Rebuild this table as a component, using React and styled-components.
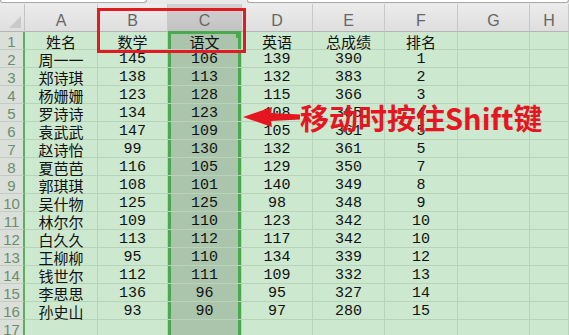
import React from "react";
import styled, { createGlobalStyle } from "styled-components";

const GlobalStyle = createGlobalStyle`
  html, body {
    margin: 0;
    padding: 0;
    background: #cce8cf;
    overflow: hidden;
  }
  * { box-sizing: border-box; }
`;

const COLS = ["A", "B", "C", "D", "E", "F", "G", "H"];
const WIDTHS = "25px 73px 70px 74px 71px 72px 73px 72px 1fr";
const SELECTED = 2; // column C

const rows = [
  ["姓名", "数学", "语文", "英语", "总成绩", "排名"],
  ["周一一", "145", "106", "139", "390", "1"],
  ["郑诗琪", "138", "113", "132", "383", "2"],
  ["杨姗姗", "123", "128", "115", "366", "3"],
  ["罗诗诗", "134", "123", "108", "365", "4"],
  ["袁武武", "147", "109", "105", "361", "5"],
  ["赵诗怡", "99", "130", "132", "361", "5"],
  ["夏芭芭", "116", "105", "129", "350", "7"],
  ["郭琪琪", "108", "101", "140", "349", "8"],
  ["吴什物", "125", "125", "98", "348", "9"],
  ["林尔尔", "109", "110", "123", "342", "10"],
  ["白久久", "113", "112", "117", "342", "10"],
  ["王柳柳", "95", "110", "134", "339", "12"],
  ["钱世尔", "112", "111", "109", "332", "13"],
  ["李思思", "136", "96", "95", "327", "14"],
  ["孙史山", "93", "90", "97", "280", "15"],
  ["", "", "", "", "", ""],
];

const Page = styled.div`
  position: relative;
  width: 569px;
  height: 335px;
  overflow: hidden;
`;

const TopStrip = styled.div`
  height: 4px;
  background: #e9e9e9;
  display: flex;
  gap: 100px;
`;

const FormulaBox = styled.div`
  height: 3px;
  width: ${(p) => p.$w};
  flex: ${(p) => (p.$grow ? 1 : "none")};
  background: #fff;
  border: 1px solid #a9a9a9;
  border-top: none;
  border-radius: 0 0 4px 4px;
`;

const Sheet = styled.div`
  display: grid;
  grid-template-columns: ${WIDTHS};
  grid-template-rows: 28px;
  grid-auto-rows: 18px;
`;

const Corner = styled.div`
  position: relative;
  background: linear-gradient(#ececec, #dedede);
  border-right: 1px solid #c4c4c4;
  border-bottom: 1px solid #b4b4b4;

  &::after {
    content: "";
    position: absolute;
    right: 3px;
    bottom: 3px;
    border-left: 12px solid transparent;
    border-bottom: 12px solid #c9c9c9;
  }
`;

const ColHead = styled.div`
  display: flex;
  align-items: center;
  justify-content: center;
  padding-top: 7px;
  background: ${(p) =>
    p.$sel ? "linear-gradient(#d2d2d2, #c2c2c2)" : "linear-gradient(#ececec, #dedede)"};
  border-right: 1px solid #c8c8c8;
  border-bottom: 1px solid ${(p) => (p.$sel ? "#4aa94e" : "#b4b4b4")};
  color: #666;
  font-family: "Liberation Sans", Arial, sans-serif;
  font-size: 16px;
`;

const RowHead = styled.div`
  display: flex;
  align-items: center;
  justify-content: center;
  background: #dadfda;
  border-bottom: 1px solid #c4cbc4;
  border-right: 2px solid #58b05a;
  color: #6a8d6a;
  font-family: "Liberation Sans", Arial, sans-serif;
  font-size: 15px;
  padding-top: 2px;
`;

const Cell = styled.div`
  position: relative;
  display: flex;
  align-items: center;
  justify-content: center;
  padding-top: 2px;
  background: ${(p) => (p.$sel ? "#aac5ab" : "#cce8cf")};
  border-right: 1px solid #b7d3b9;
  border-bottom: 1px solid #b7d3b9;
  box-shadow: ${(p) =>
    p.$sel
      ? `inset 3px 0 #4aa94e, inset -3px 0 #4aa94e${p.$top ? ", inset 0 2px #4aa94e" : ""}`
      : "none"};
  color: #111;
  font-family: ${(p) =>
    p.$num
      ? `"Liberation Mono", "Courier New", monospace`
      : `"Noto Sans CJK SC", sans-serif`};
  font-size: 15px;
  line-height: 1;
`;

const FillHandle = styled.span`
  position: absolute;
  right: 0;
  top: 1px;
  width: 5px;
  height: 5px;
  background: #4aa94e;
`;

const RedBox = styled.div`
  position: absolute;
  left: 97px;
  top: 8px;
  width: 149px;
  height: 45px;
  border: 3px solid #e11b22;
`;

const Callout = styled.div`
  position: absolute;
  left: 243px;
  top: 99px;
  display: flex;
  align-items: center;
`;

const CalloutText = styled.span`
  color: #e5161f;
  font-family: "Noto Sans CJK SC", sans-serif;
  font-weight: 700;
  font-size: 29px;
  line-height: 36px;
  white-space: nowrap;
`;

const Arrow = () => (
  <svg width="57" height="22" viewBox="0 0 57 22">
    <path d="M0 11 L29 1 L28 7 L57 8.5 L57 13.5 L28 15 L29 21 Z" fill="#e5161f" />
  </svg>
);

export default function App() {
  return (
    <Page>
      <GlobalStyle />
      <TopStrip>
        <FormulaBox $w="147px" />
        <FormulaBox $grow />
      </TopStrip>
      <Sheet>
        <Corner />
        {COLS.map((c, i) => (
          <ColHead key={c} $sel={i === SELECTED}>
            {c}
          </ColHead>
        ))}
        {rows.map((r, ri) => (
          <React.Fragment key={ri}>
            <RowHead>{ri + 1}</RowHead>
            {COLS.map((c, ci) => {
              const v = r[ci] || "";
              return (
                <Cell
                  key={c}
                  $sel={ci === SELECTED}
                  $top={ri === 0}
                  $num={ri > 0 && ci > 0}
                >
                  {v}
                  {ri === 0 && ci === SELECTED && <FillHandle />}
                </Cell>
              );
            })}
          </React.Fragment>
        ))}
      </Sheet>
      <RedBox />
      <Callout>
        <Arrow />
        <CalloutText>移动时按住Shift键</CalloutText>
      </Callout>
    </Page>
  );
}
